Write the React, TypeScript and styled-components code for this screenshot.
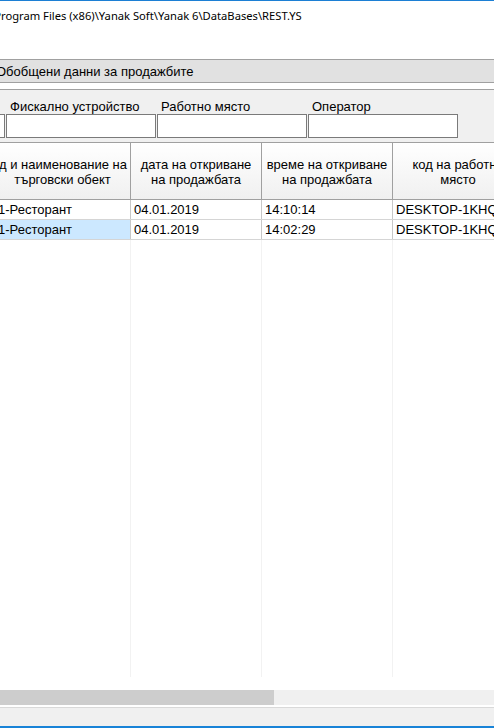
import React from 'react';
import styled, { createGlobalStyle } from 'styled-components';

// the screenshot is a crop: the window continues to the left, off screen
const SHIFT = 150;

const GlobalStyle = createGlobalStyle`
    html, body {
        margin: 0;
        padding: 0;
        background: #ffffff;
        overflow: hidden;
    }
    #root {
        width: 494px;
        height: 728px;
    }
`;

const Frame = styled.div`
    width: 494px;
    height: 728px;
    overflow: hidden;
    background: #ffffff;
`;

const Window = styled.div`
    margin-left: -${SHIFT}px;
    width: 760px;
    height: 728px;
    box-sizing: border-box;
    display: flex;
    flex-direction: column;
    border-top: 1px solid #1c7fd4;
    border-bottom: 2px solid #1883d7;
    font-family: 'Liberation Sans', Arial, sans-serif;
    font-size: 13px;
    color: #000000;
`;

const TitleBar = styled.div`
    height: 58px;
    flex: none;
    box-sizing: border-box;
    padding: 7px 0 0 130px;
    font-family: 'Noto Sans', 'Open Sans', sans-serif;
    font-size: 11.2px;
    line-height: 16px;
    white-space: nowrap;
    background: #ffffff;
`;

const TabStrip = styled.div`
    height: 24px;
    flex: none;
    box-sizing: border-box;
    border-top: 1px solid #a0a0a0;
    border-bottom: 1px solid #a0a0a0;
    background: #e1e1e1;
    padding-left: 146px;
    line-height: 23px;
    white-space: nowrap;
`;

const Spacer = styled.div`
    height: 6px;
    flex: none;
    background: #ffffff;
`;

const FilterPanel = styled.div`
    flex: none;
    display: flex;
    gap: 1px;
    box-sizing: border-box;
    height: 53px;
    border-top: 1px solid #a0a0a0;
    background: #f0f0f0;
    padding: 7px 0 4px 5px;
`;

const Field = styled.div`
    width: 150px;
    display: flex;
    flex-direction: column;
`;

const FieldLabel = styled.div`
    height: 17px;
    line-height: 19px;
    padding-left: 4px;
    white-space: nowrap;
`;

const FieldInput = styled.div`
    height: 24px;
    box-sizing: border-box;
    border: 1px solid #7a7a7a;
    background: #ffffff;
`;

const Grid = styled.div`
    flex: 1;
    min-height: 0;
    display: flex;
    flex-direction: column;
    border-top: 1px solid #a0a0a0;
    background: #ffffff;
    padding-bottom: 2px;
`;

const HeaderRow = styled.div`
    display: flex;
    flex: none;
    height: 57px;
    box-sizing: border-box;
    border-bottom: 1px solid #a0a0a0;
    background: linear-gradient(#ffffff, #f0f0f0);
`;

const HeaderCell = styled.div<{ $w: number }>`
    width: ${(p) => p.$w}px;
    flex: none;
    box-sizing: border-box;
    border-right: 1px solid #a0a0a0;
    padding: 2px 3px 0;
    display: flex;
    flex-direction: column;
    justify-content: center;
    overflow: hidden;
`;

// a line too wide for its cell keeps its right end in view, as the Windows grid draws it
const HeaderLine = styled.div`
    direction: rtl;
    text-align: center;
    white-space: nowrap;
    line-height: 15px;
`;

const DataRow = styled.div`
    display: flex;
    flex: none;
    height: 20px;
    box-sizing: border-box;
    border-bottom: 1px solid #d5d5d5;
`;

const DataCell = styled.div<{ $w: number; $selected?: boolean }>`
    width: ${(p) => p.$w}px;
    flex: none;
    box-sizing: border-box;
    border-right: 1px solid #c8c8c8;
    padding: 0 3px;
    line-height: 19px;
    white-space: nowrap;
    overflow: hidden;
    background: ${(p) => (p.$selected ? '#cce8ff' : 'transparent')};
`;

const Filler = styled.div`
    flex: 1;
    display: flex;
    margin-bottom: 13px;
`;

const FillerCell = styled.div<{ $w: number }>`
    width: ${(p) => p.$w}px;
    flex: none;
    box-sizing: border-box;
    border-right: 1px solid #f2f2f2;
`;

const ScrollTrack = styled.div`
    height: 15px;
    flex: none;
    background: #f0f0f0;
    display: flex;
`;

const ScrollThumb = styled.div`
    width: 424px;
    background: #cdcdcd;
`;

const StatusBar = styled.div`
    height: 19px;
    flex: none;
    box-sizing: border-box;
    border-top: 1px solid #d9d9d9;
    background: #f0f0f0;
`;

const columns = [
    { w: 145, lines: ['№ на', 'продажба'] },
    { w: 136, lines: ['Код и наименование на', 'търговски обект'] },
    { w: 131, lines: ['дата на откриване', 'на продажбата'] },
    { w: 131, lines: ['време на откриване', 'на продажбата'] },
    { w: 131, lines: ['код на работно', 'място'] },
    { w: 131, lines: ['оператор', ''] },
];

const rows = [
    { cells: ['2', '1-Ресторант', '04.01.2019', '14:10:14', 'DESKTOP-1KHQ7TB', 'Администратор'], selected: -1 },
    { cells: ['1', '1-Ресторант', '04.01.2019', '14:02:29', 'DESKTOP-1KHQ7TB', 'Администратор'], selected: 1 },
];

const filters = ['Търговски обект', 'Фискално устройство', 'Работно място', 'Оператор'];

const App = () => (
    <Frame>
        <GlobalStyle />
        <Window>
            <TitleBar>C:\Program Files (x86)\Yanak Soft\Yanak 6\DataBases\REST.YS</TitleBar>
            <TabStrip>Обобщени данни за продажбите</TabStrip>
            <Spacer />
            <FilterPanel>
                {filters.map((label) => (
                    <Field key={label}>
                        <FieldLabel>{label}</FieldLabel>
                        <FieldInput />
                    </Field>
                ))}
            </FilterPanel>
            <Grid>
                <HeaderRow>
                    {columns.map((col, i) => (
                        <HeaderCell key={i} $w={col.w}>
                            {col.lines.map((line, j) => (
                                <HeaderLine key={j}>{line || '\u00a0'}</HeaderLine>
                            ))}
                        </HeaderCell>
                    ))}
                </HeaderRow>
                {rows.map((row, r) => (
                    <DataRow key={r}>
                        {row.cells.map((value, c) => (
                            <DataCell key={c} $w={columns[c].w} $selected={row.selected === c}>
                                {value}
                            </DataCell>
                        ))}
                    </DataRow>
                ))}
                <Filler>
                    {columns.map((col, i) => (
                        <FillerCell key={i} $w={col.w} />
                    ))}
                </Filler>
                <ScrollTrack>
                    <ScrollThumb />
                </ScrollTrack>
            </Grid>
            <StatusBar />
        </Window>
    </Frame>
);

export default App;
